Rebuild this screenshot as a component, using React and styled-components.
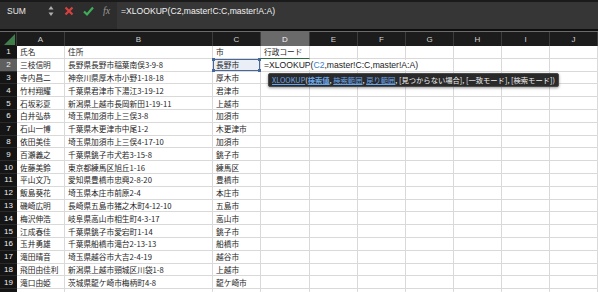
import React from "react";
import styled, { createGlobalStyle, css } from "styled-components";

const GlobalStyle = createGlobalStyle`
  html, body { margin: 0; padding: 0; background: #1b1b1b; overflow: hidden; }
  body { font-family: "Noto Sans CJK JP", "Noto Sans", sans-serif; }
`;

const Window = styled.div`
  position: relative;
  width: 598px;
  height: 292px;
  display: flex;
  flex-direction: column;
  overflow: hidden;
  background: #1b1b1b;
`;

const FormulaBar = styled.div`
  flex-shrink: 0;
  height: 29px;
  box-sizing: border-box;
  border-top: 2px solid #1a1a1a;
  display: flex;
  background: #2d2d2d;
`;

const NameBox = styled.div`
  width: 58px;
  display: flex;
  align-items: flex-start;
  justify-content: space-between;
  padding: 3px 4px 0 7px;
  box-sizing: border-box;
  color: #e8e8e8;
  font: 500 8.5px "Liberation Sans", "Noto Sans", sans-serif;
  line-height: 12px;
`;

const Spinner = styled.svg`
  width: 6px;
  height: 12px;
`;

const Controls = styled.div`
  width: 59px;
  display: flex;
  align-items: flex-start;
  gap: 9px;
  padding: 3px 0 0 6px;
  box-sizing: border-box;
`;

const Fx = styled.span`
  font: italic 10px "Liberation Serif", serif;
  color: #9a9a9a;
  line-height: 12px;
`;

const FormulaInput = styled.div`
  flex: 1;
  background: #363636;
  color: #f2f2f2;
  padding: 3px 4px 0 4px;
  font: 500 8.6px "Liberation Sans", "Noto Sans", sans-serif;
  line-height: 12px;
`;

const Divider = styled.div`
  flex-shrink: 0;
  height: 3px;
  box-sizing: border-box;
  background: #0e0e0e;
  border-bottom: 1px solid #6b6b6b;
`;

const Sheet = styled.div`
  flex-shrink: 0;
  display: grid;
  grid-template-columns: 17px 48px 148px 48px 49px repeat(6, 48px);
  grid-template-rows: 14px repeat(20, 12.8px);
  background: #ffffff;
`;

const Corner = styled.div`
  background: #181818;
  border-right: 1px solid #3a3a3a;
  position: relative;
  overflow: hidden;
  &::after {
    content: "";
    position: absolute;
    right: 1px;
    bottom: 1px;
    border-style: solid;
    border-width: 0 0 11px 11px;
    border-color: transparent transparent #3f7d4a transparent;
  }
`;

const ColHeader = styled.div`
  background: ${(p) => (p.$active ? "#6a6a6a" : "#1c1c1c")};
  color: ${(p) => (p.$active ? "#f4f4f4" : "#d2d2d2")};
  border-right: 1px solid #3c3c3c;
  font: 8px "Liberation Sans", sans-serif;
  display: flex;
  align-items: center;
  justify-content: center;
`;

const RowHeader = styled.div`
  background: ${(p) => (p.$active ? "#5f5f5f" : "#151515")};
  color: #f0f0f0;
  border-bottom: 1px solid #2a2a2a;
  font: 8px "Liberation Sans", sans-serif;
  display: flex;
  align-items: center;
  justify-content: center;
`;

const Cell = styled.div`
  position: relative;
  box-sizing: border-box;
  border-right: 1px solid #d9d9d9;
  border-bottom: 1px solid #d9d9d9;
  color: #1e1e1e;
  font-size: 7.7px;
  padding: 0 3px;
  white-space: nowrap;
  overflow: hidden;
  display: flex;
  align-items: center;
  background: #ffffff;
  ${(p) =>
    p.$selected &&
    css`
      overflow: visible;
      background: #e9eef7;
      box-shadow: inset 0 0 0 1px #48689a;
    `}
  ${(p) =>
    p.$editing &&
    css`
      overflow: visible;
      z-index: 2;
      border-top: 1px solid #2f6b3f;
      margin-top: -1px;
    `}
`;

const Handle = styled.span`
  position: absolute;
  width: 3px;
  height: 3px;
  background: #48689a;
  ${(p) => (p.$top ? "top: -1px;" : "bottom: -1px;")}
  ${(p) => (p.$left ? "left: -1px;" : "right: -1px;")}
`;

const EditText = styled.span`
  background: #ffffff;
  padding-right: 4px;
  font: 8.6px "Liberation Sans", "Noto Sans", sans-serif;
  color: #1a1a1a;
`;

const Ref = styled.span`
  color: #3f7fc4;
`;

const Tooltip = styled.div`
  position: absolute;
  left: 268px;
  top: 73px;
  z-index: 5;
  background: #2a2a2a;
  border: 1px solid #4a4a4a;
  border-radius: 2px;
  padding: 0 3px;
  height: 12px;
  display: flex;
  align-items: center;
  white-space: nowrap;
  color: #f0f0f0;
  font-size: 7.3px;
  box-shadow: 0 1px 3px rgba(0, 0, 0, 0.4);
`;

const ArgLink = styled.span`
  color: #6aa7ea;
  text-decoration: underline;
  font-weight: ${(p) => (p.$current ? 700 : 400)};
`;

const columns = ["A", "B", "C", "D", "E", "F", "G", "H", "I", "J"];

const rows = [
  ["氏名", "住所", "市", "行政コード"],
  ["三枝信明", "長野県長野市稲葉南俣3-9-8", "長野市", ""],
  ["寺内昌二", "神奈川県厚木市小野1-18-18", "厚木市", ""],
  ["竹村翔耀", "千葉県君津市下湯江3-19-12", "君津市", ""],
  ["石坂彩夏", "新潟県上越市長岡新田1-19-11", "上越市", ""],
  ["白井弘恭", "埼玉県加須市上三俣3-8", "加須市", ""],
  ["石山一博", "千葉県木更津市中尾1-2", "木更津市", ""],
  ["依田美佳", "埼玉県加須市上三俣4-17-10", "加須市", ""],
  ["百瀬義之", "千葉県銚子市犬若3-15-8", "銚子市", ""],
  ["佐藤美鈴", "東京都練馬区旭丘1-16", "練馬区", ""],
  ["平山文乃", "愛知県豊橋市忠興2-8-20", "豊橋市", ""],
  ["飯島葵花", "埼玉県本庄市前原2-4", "本庄市", ""],
  ["磯崎広明", "長崎県五島市猪之木町4-12-10", "五島市", ""],
  ["梅沢伸浩", "岐阜県高山市相生町4-3-17", "高山市", ""],
  ["江成春佳", "千葉県銚子市愛宕町1-14", "銚子市", ""],
  ["玉井勇雄", "千葉県船橋市滝台2-13-13", "船橋市", ""],
  ["滝田晴音", "埼玉県越谷市大吉2-4-19", "越谷市", ""],
  ["飛田由佳利", "新潟県上越市頸城区川袋1-8", "上越市", ""],
  ["滝口由姫", "茨城県龍ケ崎市梅柄町4-8", "龍ケ崎市", ""],
];

// the sliver of row 20 peeking in at the bottom edge
const TRAILING_ROWS = 1;

const renderCell = (r, c, value) => {
  const key = `${r}-${c}`;
  if (r === 1 && c === 2) {
    return (
      <Cell key={key} $selected>
        {value}
        <Handle $top $left />
        <Handle $top />
        <Handle $left />
        <Handle />
      </Cell>
    );
  }
  if (r === 1 && c === 3) {
    return (
      <Cell key={key} $editing>
        <EditText>
          =XLOOKUP(<Ref>C2</Ref>,master!C:C,master!A:A)
        </EditText>
      </Cell>
    );
  }
  return <Cell key={key}>{value}</Cell>;
};

export default function App() {
  const trailing = Array.from({ length: TRAILING_ROWS }, (_, i) => i);
  return (
    <Window>
      <GlobalStyle />
      <FormulaBar>
        <NameBox>
          SUM
          <Spinner viewBox="0 0 6 12">
            <path d="M3 1 L5.5 4.5 H0.5 Z" fill="#b0b0b0" />
            <path d="M3 11 L5.5 7.5 H0.5 Z" fill="#b0b0b0" />
          </Spinner>
        </NameBox>
        <Controls>
          <svg width="10" height="12" viewBox="0 0 10 12">
            <path d="M1.5 2.5 L8.5 9.5 M8.5 2.5 L1.5 9.5" stroke="#d8403f" strokeWidth="2.2" />
          </svg>
          <svg width="11" height="12" viewBox="0 0 11 12">
            <path d="M1 6.5 L4 9.5 L10 2.5" stroke="#3fae5a" strokeWidth="2.2" fill="none" />
          </svg>
          <Fx>fx</Fx>
        </Controls>
        <FormulaInput>=XLOOKUP(C2,master!C:C,master!A:A)</FormulaInput>
      </FormulaBar>
      <Divider />
      <Sheet>
        <Corner />
        {columns.map((col) => (
          <ColHeader key={col} $active={col === "D"}>
            {col}
          </ColHeader>
        ))}
        {rows.map((row, r) => (
          <React.Fragment key={r}>
            <RowHeader $active={r === 1}>{r + 1}</RowHeader>
            {columns.map((_, c) => renderCell(r, c, row[c] || ""))}
          </React.Fragment>
        ))}
        {trailing.map((i) => (
          <React.Fragment key={`t${i}`}>
            <RowHeader />
            {columns.map((col) => (
              <Cell key={`t${i}-${col}`} />
            ))}
          </React.Fragment>
        ))}
      </Sheet>
      <Tooltip>
        <ArgLink>XLOOKUP</ArgLink>(<ArgLink $current>検索値</ArgLink>,&nbsp;
        <ArgLink>検索範囲</ArgLink>,&nbsp;<ArgLink>戻り範囲</ArgLink>, [見つからない場合], [一致モード], [検索モード])
      </Tooltip>
    </Window>
  );
}
